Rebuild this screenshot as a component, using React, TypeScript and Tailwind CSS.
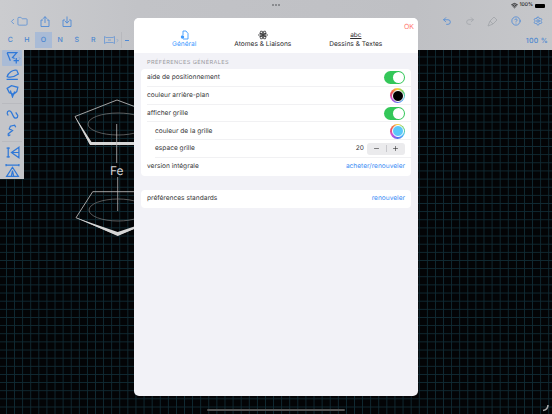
import React from 'react';
import { ChevronLeft, ChevronRight, CircleHelp, Folder, Minus, Plus, Redo2, Settings, Undo2, Wifi } from 'lucide-react';

const font = { fontFamily: 'Inter, "Liberation Sans", sans-serif' };

function Toggle() {
  return (
    <div className="flex h-[13px] w-[21px] items-center justify-end rounded-full bg-[#34c759] pr-[1px]">
      <div className="h-[11px] w-[11px] rounded-full bg-white" />
    </div>
  );
}

function Swatch({ color }: { color: string }) {
  return (
    <div className="flex h-[15px] w-[15px] items-center justify-center rounded-full bg-[conic-gradient(#f6d33c,#5ad06a,#4fc3f7,#5b6cf0,#d24fd8,#f0554f,#f6d33c)]">
      <div className={`h-[12px] w-[12px] rounded-full border border-white ${color}`} />
    </div>
  );
}

function Row({ label, inset, children, last }: { label: string; inset?: boolean; children: React.ReactNode; last?: boolean }) {
  return (
    <div className={`flex h-[17.75px] items-center ${inset ? 'pl-[14px]' : 'pl-[6px]'}`}>
      <div className={`flex h-full flex-1 items-center justify-between pr-[6px] ${last ? '' : 'shadow-[inset_0_-0.6px_0_#e4e4e8]'}`}>
        <span className="pt-[1px] text-[6.6px] text-[#3a3a3c]">{label}</span>
        {children}
      </div>
    </div>
  );
}

function ToolBtn({ active, children }: { active?: boolean; children: React.ReactNode }) {
  return (
    <div className={`flex h-[16px] w-[16.6px] items-center justify-center text-[7px] font-medium text-[#4a86d0] ${active ? 'bg-[#a9bbd6]' : ''}`}>
      {children}
    </div>
  );
}

function Molecule() {
  return (
    <svg className="absolute left-0 top-0" width="552" height="364" viewBox="0 0 552 364" fill="none">
      <path d="M75 66.5 L117 50 L160 66 L150 94 L90 94 Z" stroke="#c9c9c9" strokeWidth="0.8" />
      <path d="M75 66.5 L90 95 H150 V92 H91.5 Z" fill="#d6d6d6" />
      <ellipse cx="118" cy="74" rx="30" ry="11" stroke="#7d7d7d" strokeWidth="0.7" />
      <path d="M116.7 74 V113 M117.7 127 V161" stroke="#b5b5b5" strokeWidth="0.8" />
      <path d="M92.7 141.7 H150 L160 168 L117.7 185 L76 167.7 Z" stroke="#c9c9c9" strokeWidth="0.8" />
      <path d="M76 167.7 L117.7 186 L160 168 L117.7 182 Z" fill="#d6d6d6" />
      <ellipse cx="118" cy="160" rx="29" ry="11" stroke="#7d7d7d" strokeWidth="0.7" />
    </svg>
  );
}

function PaletteIcon({ d, active, h = 'h-[17px]' }: { d: string; active?: boolean; h?: string }) {
  return (
    <div className={`relative flex w-[20px] items-center justify-center rounded-[1px] ${h} ${active ? 'bg-[#a9bbd6]' : ''}`}>
      <svg width="15" height="15" viewBox="0 0 14 14" fill="none" stroke="#2f78d8" strokeWidth="1.15">
        <path d={d} />
      </svg>
      {active && <ChevronRight size={5} className="absolute -right-[0px] top-[6px] text-[#5a8fd6]" />}
    </div>
  );
}

function ExportIcon({ down }: { down?: boolean }) {
  return (
    <svg width="10" height="11" viewBox="0 0 10 11" fill="none" stroke="#4f8ad6" strokeWidth="0.9">
      <path d="M3 4 H1 V10.5 H9 V4 H7" />
      {down ? <path d="M5 0.5 V7 M3 5 L5 7.2 L7 5" /> : <path d="M5 7 V0.8 M3 2.8 L5 0.6 L7 2.8" />}
    </svg>
  );
}

export default function App() {
  return (
    <div className="relative h-[414px] w-[552px] overflow-hidden bg-black antialiased [text-rendering:geometricPrecision]" style={font}>
      <div className="flex h-[50px] flex-col bg-[linear-gradient(90deg,#cbcccf,#c2c3c7_25%,#bfc0c4_75%,#c6c7ca)]">
        <div className="relative flex h-[11px] items-center justify-end gap-[2px] pr-[7px] text-[5px] font-medium text-[#1c1c1e]">
          <div className="absolute left-[272px] top-[4px] flex gap-[1px]">
            <div className="h-[2px] w-[2px] rounded-full bg-[#77787c]" />
            <div className="h-[2px] w-[2px] rounded-full bg-[#77787c]" />
            <div className="h-[2px] w-[2px] rounded-full bg-[#77787c]" />
          </div>
          <Wifi size={7} strokeWidth={3} />
          <span>100%</span>
          <div className="h-[4px] w-[10px] rounded-[1px] bg-black" />
        </div>
        <div className="flex h-[20px] items-center justify-between pl-[8px] pr-[9px] text-[#4f8ad6]">
          <div className="flex items-center gap-[12px]">
            <div className="flex items-center">
              <ChevronLeft size={9} />
              <Folder size={11} strokeWidth={1.6} />
            </div>
            <ExportIcon />
            <ExportIcon down />
          </div>
          <div className="flex items-center gap-[12.5px]">
            <Undo2 size={10} />
            <Redo2 size={10} className="text-[#a4a7ac]" />
            <svg width="11" height="11" viewBox="0 0 11 11" fill="none" stroke="#a4a7ac" strokeWidth="0.9">
              <path d="M7 1 L10 4 L6 8 L3 5 Z M3 5 L1 10 L6 8" />
            </svg>
            <CircleHelp size={10} />
            <Settings size={10} />
          </div>
        </div>
        <div className="flex h-[19px] items-start justify-between pr-[4px] pt-[1px]">
          <div className="flex items-center pl-[2px]">
            {['C', 'H', 'O', 'N', 'S', 'R'].map((a) => (
              <ToolBtn key={a} active={a === 'O'}>
                {a}
              </ToolBtn>
            ))}
            <svg className="ml-[2px]" width="11" height="8" viewBox="0 0 11 8" fill="none" stroke="#5a8fd6" strokeWidth="0.7">
              <path d="M0.5 0.5 L2 1.5 H9 L10.5 0.5 V7.5 L9 6.5 H2 L0.5 7.5 Z M4 4 H7" />
            </svg>
            <ChevronRight size={5} className="text-[#5a8fd6]" />
            <div className="ml-[1px] h-[16px] w-[1px] bg-[#b7b8bd]" />
            <div className="ml-[3px] h-[1px] w-[4px] bg-[#4f8ad6]" />
          </div>
          <span className="pt-[4px] text-[7px] font-medium tracking-[0.3px] text-[#4a86d0]">100 %</span>
        </div>
      </div>

      <div className="relative h-[364px] bg-[#030406] bg-[linear-gradient(#102a33_0.7px,transparent_0.7px),linear-gradient(90deg,#102a33_0.7px,transparent_0.7px)] bg-[size:8.1px_8.15px] bg-[position:6px_6.5px]">
        <Molecule />
        <span className="absolute left-[110px] top-[113px] text-[12px] leading-[15px] text-[#d0d0d0]">Fe</span>
        <div className="absolute left-0 top-0 flex h-[129px] w-[23.5px] flex-col bg-[#c4c5c9] pl-[2px]">
          <PaletteIcon active h="h-[16px]" d="M2 2.5 H11 L7 7 L9 8 M2 2.5 L5 10 M8 10 H13 M10.5 7.5 V12.5" />
          <PaletteIcon d="M2 10 C3 6 8 3 11 4 L12.5 7.5 C9 10 5 11 2 10 Z M1.5 12.5 H12" />
          <PaletteIcon h="h-[18px]" d="M2 5 L6 2.5 L12 4 L11 8 L8 10.5 L4 9 Z M5 7 L7 13 L9 8" />
          <div className="mb-[2px] mt-[3px] h-[1px] w-[20px] shrink-0 bg-[#b9babf]" />
          <PaletteIcon d="M2 6 C2 3 5 3 6 5 L8 9 C9 11 12 11 12 8 M2 6 L3 8 M10 5 L12 8" />
          <PaletteIcon d="M3 12 L3 10 L7 7 L4 5.5 L5 3 L9 2 L10 4 M3 12 L5 11" />
          <div className="my-[2px] h-[1px] w-[20px] shrink-0 bg-[#b9babf]" />
          <PaletteIcon h="h-[18px]" d="M3 2 V12 M1.5 3 H4.5 M1.5 11 H4.5 M13 2 L6 7 L13 12 Z M13 7 H6" />
          <PaletteIcon h="h-[18px]" d="M1 2 H13 M1 1 V3 M13 1 V3 M7 4 L1.5 12.5 H12.5 Z M6 12 L7 7 L8 12" />
        </div>
      </div>

      <div className="absolute left-[134px] top-[18px] flex h-[378px] w-[284px] flex-col overflow-hidden rounded-[5px] bg-[#f2f2f7]">
        <div className="relative flex h-[35px] shrink-0 items-end gap-[38px] bg-white pb-[4px] pl-[38px]">
          <div className="flex flex-col items-center text-[#3f9bff]">
            <svg width="9" height="10" viewBox="0 0 9 10" fill="none" stroke="#3f9bff" strokeWidth="0.9">
              <path d="M3 1 H6 L8 3.5 V9 H3 M3 1 V5" />
              <circle cx="2.5" cy="7" r="1.7" fill="#3f9bff" stroke="none" />
            </svg>
            <span className="text-[6.6px] leading-[9px]">Général</span>
          </div>
          <div className="flex flex-col items-center text-[#2c2c2e]">
            <svg width="10" height="10" viewBox="0 0 10 10" fill="none" stroke="#2c2c2e" strokeWidth="0.7">
              <ellipse cx="5" cy="5" rx="4.5" ry="1.8" />
              <ellipse cx="5" cy="5" rx="4.5" ry="1.8" transform="rotate(60 5 5)" />
              <ellipse cx="5" cy="5" rx="4.5" ry="1.8" transform="rotate(120 5 5)" />
              <circle cx="5" cy="5" r="1" fill="#2c2c2e" />
            </svg>
            <span className="text-[6.6px] leading-[9px]">Atomes &amp; Liaisons</span>
          </div>
          <div className="flex flex-col items-center text-[#2c2c2e]">
            <span className="text-[6.5px] leading-[10px] underline">abc</span>
            <span className="text-[6.6px] leading-[9px]">Dessins &amp; Textes</span>
          </div>
          <span className="absolute right-[4px] top-[4px] text-[7px] leading-[9px] text-[#ff7a70]">OK</span>
        </div>
        <div className="flex flex-col px-[7px]">
          <div className="flex h-[16px] items-end pb-[1.5px] pl-[6px] text-[5.6px] tracking-[0.4px] text-[#9a9a9f]">PRÉFÉRENCES GÉNÉRALES</div>
          <div className="rounded-[4px] bg-white">
            <Row label="aide de positionnement"><Toggle /></Row>
            <Row label="couleur arrière-plan"><Swatch color="bg-black" /></Row>
            <Row label="afficher grille"><Toggle /></Row>
            <Row label="couleur de la grille" inset><Swatch color="bg-[#5ac8fa]" /></Row>
            <Row label="espace grille" inset>
              <div className="flex items-center gap-[3px]">
                <span className="pt-[1px] text-[6.6px] text-[#3a3a3c]">20</span>
                <div className="flex h-[12.5px] w-[38px] items-center rounded-[3px] bg-[#ebebed] text-[#2c2c2e]">
                  <div className="flex flex-1 justify-center"><Minus size={7} /></div>
                  <div className="h-[7px] w-[0.5px] bg-[#c8c8cc]" />
                  <div className="flex flex-1 justify-center"><Plus size={7} /></div>
                </div>
              </div>
            </Row>
            <Row label="version intégrale" last>
              <span className="pt-[1px] text-[6.6px] text-[#3f8ff5]">acheter/renouveler</span>
            </Row>
          </div>
          <div className="mt-[14.5px] rounded-[4px] bg-white">
            <Row label="préférences standards" last>
              <span className="pt-[1px] text-[6.6px] text-[#3f8ff5]">renouveler</span>
            </Row>
          </div>
        </div>
      </div>

      <div className="absolute bottom-[3px] left-[207px] h-[2px] w-[138px] rounded-full bg-[#555]" />
      <svg className="absolute left-[541px] top-[404px]" width="9" height="8" viewBox="0 0 9 8" fill="none" stroke="#aaa" strokeWidth="1.6">
        <path d="M7 1 C7 4 5 6 2 6.5" />
      </svg>
    </div>
  );
}
